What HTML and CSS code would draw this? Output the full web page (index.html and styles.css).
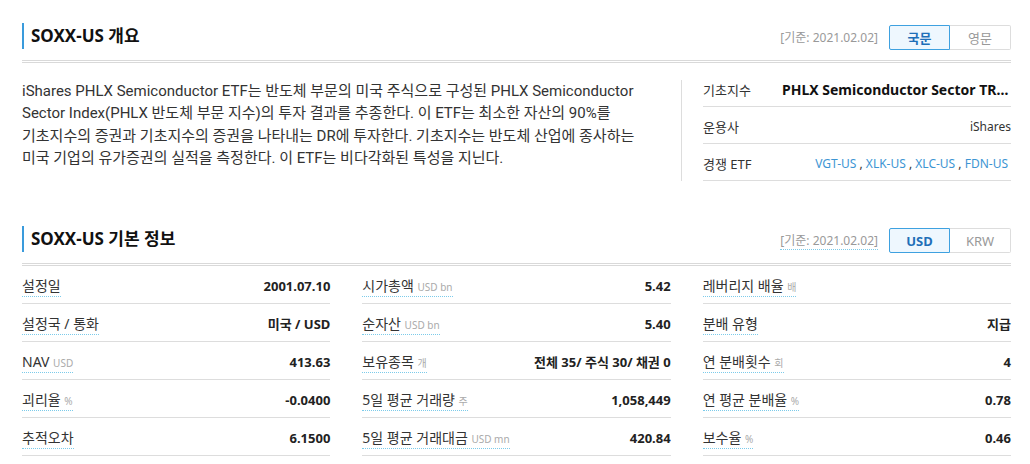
FILE: index.html
```html
<!DOCTYPE html>
<html lang="ko">
<head>
    <meta charset="UTF-8">
    <meta name="viewport" content="width=device-width, initial-scale=1.0">
    <title>SOXX-US</title>
    <link rel="stylesheet" href="styles.css">
</head>
<body>
    <div class="main">

        <div class="sec">
            <div class="sec-head">
                <h2>SOXX-US 개요</h2>
                <div class="opt">
                    <span class="base">[기준: 2021.02.02]</span>
                    <div class="tabs">
                        <button class="on">국문</button>
                        <button>영문</button>
                    </div>
                </div>
            </div>
            <div class="overview">
                <p class="desc">iShares PHLX Semiconductor ETF는 반도체 부문의 미국 주식으로 구성된 PHLX Semiconductor Sector Index(PHLX 반도체 부문 지수)의 투자 결과를 추종한다. 이 ETF는 최소한 자산의 90%를 기초지수의 증권과 기초지수의 증권을 나타내는 DR에 투자한다. 기초지수는 반도체 산업에 종사하는 미국 기업의 유가증권의 실적을 측정한다. 이 ETF는 비다각화된 특성을 지닌다.</p>
                <div class="sep"></div>
                <ul class="info">
                    <li>
                        <span class="lbl">기초지수</span>
                        <span class="val strong">PHLX Semiconductor Sector TR Index</span>
                    </li>
                    <li>
                        <span class="lbl">운용사</span>
                        <span class="val">iShares</span>
                    </li>
                    <li>
                        <span class="lbl">경쟁 ETF</span>
                        <span class="val links"><a href="#">VGT-US</a> , <a href="#">XLK-US</a> , <a href="#">XLC-US</a> , <a href="#">FDN-US</a></span>
                    </li>
                </ul>
            </div>
        </div>

        <div class="sec">
            <div class="sec-head">
                <h2>SOXX-US 기본 정보</h2>
                <div class="opt">
                    <span class="base dot">[기준: 2021.02.02]</span>
                    <div class="tabs">
                        <button class="on">USD</button>
                        <button>KRW</button>
                    </div>
                </div>
            </div>
            <div class="grid">
                <div class="cell"><span class="name">설정일</span><b>2001.07.10</b></div>
                <div class="cell"><span class="name">시가총액 <small>USD bn</small></span><b>5.42</b></div>
                <div class="cell"><span class="name">레버리지 배율 <small>배</small></span><b></b></div>

                <div class="cell"><span class="name">설정국 / 통화</span><b>미국 / USD</b></div>
                <div class="cell"><span class="name">순자산 <small>USD bn</small></span><b>5.40</b></div>
                <div class="cell"><span class="name">분배 유형</span><b>지급</b></div>

                <div class="cell"><span class="name">NAV <small>USD</small></span><b>413.63</b></div>
                <div class="cell"><span class="name">보유종목 <small>개</small></span><b>전체 35/ 주식 30/ 채권 0</b></div>
                <div class="cell"><span class="name">연 분배횟수 <small>회</small></span><b>4</b></div>

                <div class="cell"><span class="name">괴리율 <small>%</small></span><b>-0.0400</b></div>
                <div class="cell"><span class="name">5일 평균 거래량 <small>주</small></span><b>1,058,449</b></div>
                <div class="cell"><span class="name">연 평균 분배율 <small>%</small></span><b>0.78</b></div>

                <div class="cell"><span class="name">추적오차</span><b>6.1500</b></div>
                <div class="cell"><span class="name">5일 평균 거래대금 <small>USD mn</small></span><b>420.84</b></div>
                <div class="cell"><span class="name">보수율 <small>%</small></span><b>0.46</b></div>
            </div>
        </div>

    </div>
</body>
</html>
```

FILE: styles.css
```css
*{
    margin: 0;
    padding: 0;
    box-sizing: border-box;
}
body{
    font-family: "Noto Sans", "Noto Sans CJK KR", sans-serif;
    font-size: 13px;
    color: #333;
    background: #fff;
}
.main{
    width: 989px;
    margin-left: 22px;
}
.sec + .sec{
    margin-top: 22px;
}
.sec-head{
    display: flex;
    justify-content: space-between;
    align-items: center;
    padding: 22px 0 10px;
    border-bottom: 3px double #d9d9d9;
}
h2{
    border-left: 2px solid #3a9bdc;
    padding-left: 7px;
    font-size: 17px;
    line-height: 26px;
    color: #111;
}
.opt{
    display: flex;
    align-items: center;
    gap: 11px;
    margin-top: 3px;
}
.base{
    font-size: 12px;
    color: #999;
    line-height: 17px;
}
.base.dot{
    border-bottom: 1px dotted #7ccbea;
}
.tabs{
    display: flex;
}
.tabs button{
    width: 61px;
    height: 25px;
    font-family: inherit;
    font-size: 13px;
    color: #999;
    background: #fff;
    border: 1px solid #ddd;
    border-radius: 0 2px 2px 0;
    cursor: pointer;
}
.tabs button.on{
    color: #1f6fb8;
    font-weight: bold;
    background: #eef7fe;
    border-color: #3ea1e0;
    border-radius: 2px 0 0 2px;
}
.tabs button + button{
    border-left: none;
}

/* overview */
.overview{
    display: flex;
    padding-top: 7px;
}
.desc{
    width: 638px;
    margin-top: 10px;
    font-family: Roboto, "Noto Sans CJK KR", sans-serif;
    font-size: 15px;
    line-height: 22.3px;
    word-break: keep-all;
    color: #333;
}
.sep{
    width: 1px;
    margin: 10px 21px 0;
    background: #ddd;
}
.info{
    list-style: none;
    width: 308px;
}
.info li{
    display: flex;
    align-items: flex-start;
    height: 37px;
    padding-top: 10px;
    line-height: 20px;
    border-bottom: 1px solid #ddd;
    font-size: 12px;
}
.info .lbl{
    width: 79px;
    flex-shrink: 0;
    font-size: 13px;
    color: #333;
}
.info .val{
    flex: 1;
    text-align: right;
    white-space: nowrap;
    overflow: hidden;
    text-overflow: ellipsis;
    color: #333;
}
.info .val.strong{
    font-size: 14px;
    font-weight: bold;
    color: #111;
}
.links{
    color: #666;
    padding-right: 3px;
}
.links a{
    color: #3d95d3;
    text-decoration: none;
}

/* basic info */
.grid{
    display: grid;
    grid-template-columns: repeat(3, 1fr);
    column-gap: 32px;
}
.cell{
    display: flex;
    justify-content: space-between;
    align-items: flex-start;
    height: 38px;
    padding-top: 10px;
    border-bottom: 1px solid #ddd;
}
.name{
    font-size: 14px;
    line-height: 20px;
    border-bottom: 1px dotted #7ccbea;
    color: #333;
}
.name small{
    font-size: 10px;
    line-height: 1;
    color: #aaa;
}
.cell b{
    line-height: 20px;
    color: #222;
}
```
